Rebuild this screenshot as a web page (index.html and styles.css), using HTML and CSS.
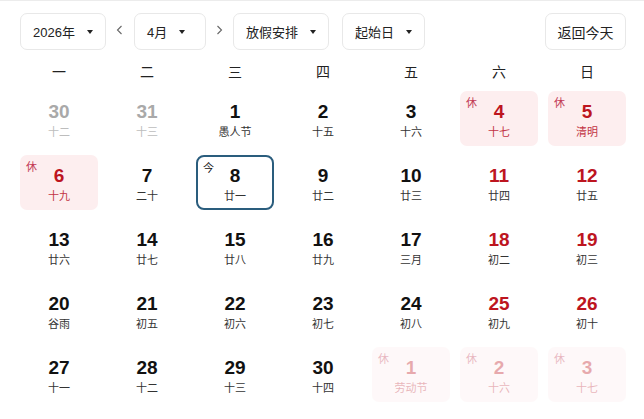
FILE: index.html
```html
<!DOCTYPE html>
<html lang="zh">
<head>
<meta charset="utf-8">
<link rel="stylesheet" href="styles.css">
</head>
<body>
<div class="page">
  <div class="toolbar">
    <div class="select select-year"><span>2026年</span><i class="caret"></i></div>
    <button class="arrow arrow-prev"><svg width="7" height="10" viewBox="0 0 7 10"><polyline points="5.5,1 1.5,5 5.5,9" fill="none" stroke="#666" stroke-width="1.1"/></svg></button>
    <div class="select select-month"><span>4月</span><i class="caret"></i></div>
    <button class="arrow arrow-next"><svg width="7" height="10" viewBox="0 0 7 10"><polyline points="1.5,1 5.5,5 1.5,9" fill="none" stroke="#666" stroke-width="1.1"/></svg></button>
    <div class="select"><span>放假安排</span><i class="caret"></i></div>
    <div class="select select-start"><span>起始日</span><i class="caret"></i></div>
    <button class="today-btn">返回今天</button>
  </div>
  <div class="weekdays">
    <div>一</div><div>二</div><div>三</div><div>四</div><div>五</div><div>六</div><div>日</div>
  </div>
  <div class="grid">
    <div class="cell other"><div class="num">30</div><div class="lunar">十二</div></div>
    <div class="cell other"><div class="num">31</div><div class="lunar">十三</div></div>
    <div class="cell"><div class="num">1</div><div class="lunar">愚人节</div></div>
    <div class="cell"><div class="num">2</div><div class="lunar">十五</div></div>
    <div class="cell"><div class="num">3</div><div class="lunar">十六</div></div>
    <div class="cell holiday"><span class="tag">休</span><div class="num">4</div><div class="lunar">十七</div></div>
    <div class="cell holiday"><span class="tag">休</span><div class="num">5</div><div class="lunar">清明</div></div>

    <div class="cell holiday"><span class="tag">休</span><div class="num">6</div><div class="lunar">十九</div></div>
    <div class="cell"><div class="num">7</div><div class="lunar">二十</div></div>
    <div class="cell today"><span class="tag">今</span><div class="num">8</div><div class="lunar">廿一</div></div>
    <div class="cell"><div class="num">9</div><div class="lunar">廿二</div></div>
    <div class="cell"><div class="num">10</div><div class="lunar">廿三</div></div>
    <div class="cell weekend"><div class="num">11</div><div class="lunar">廿四</div></div>
    <div class="cell weekend"><div class="num">12</div><div class="lunar">廿五</div></div>

    <div class="cell"><div class="num">13</div><div class="lunar">廿六</div></div>
    <div class="cell"><div class="num">14</div><div class="lunar">廿七</div></div>
    <div class="cell"><div class="num">15</div><div class="lunar">廿八</div></div>
    <div class="cell"><div class="num">16</div><div class="lunar">廿九</div></div>
    <div class="cell"><div class="num">17</div><div class="lunar">三月</div></div>
    <div class="cell weekend"><div class="num">18</div><div class="lunar">初二</div></div>
    <div class="cell weekend"><div class="num">19</div><div class="lunar">初三</div></div>

    <div class="cell"><div class="num">20</div><div class="lunar">谷雨</div></div>
    <div class="cell"><div class="num">21</div><div class="lunar">初五</div></div>
    <div class="cell"><div class="num">22</div><div class="lunar">初六</div></div>
    <div class="cell"><div class="num">23</div><div class="lunar">初七</div></div>
    <div class="cell"><div class="num">24</div><div class="lunar">初八</div></div>
    <div class="cell weekend"><div class="num">25</div><div class="lunar">初九</div></div>
    <div class="cell weekend"><div class="num">26</div><div class="lunar">初十</div></div>

    <div class="cell"><div class="num">27</div><div class="lunar">十一</div></div>
    <div class="cell"><div class="num">28</div><div class="lunar">十二</div></div>
    <div class="cell"><div class="num">29</div><div class="lunar">十三</div></div>
    <div class="cell"><div class="num">30</div><div class="lunar">十四</div></div>
    <div class="cell holiday faded"><span class="tag">休</span><div class="num">1</div><div class="lunar">劳动节</div></div>
    <div class="cell holiday faded"><span class="tag">休</span><div class="num">2</div><div class="lunar">十六</div></div>
    <div class="cell holiday faded"><span class="tag">休</span><div class="num">3</div><div class="lunar">十七</div></div>
  </div>
</div>
</body>
</html>
```
FILE: styles.css
```css
html, body {
  margin: 0;
  padding: 0;
  background: #fff;
}
body {
  font-family: "Liberation Sans", "Noto Sans CJK SC", sans-serif;
  color: #111;
  border-top: 1px solid #ececec;
  width: 644px;
  height: 418px;
  overflow: hidden;
}
.page {
  padding: 12px 18px 0 20px;
  width: 606px;
}
.toolbar {
  display: flex;
  align-items: center;
  height: 37px;
}
.select {
  box-sizing: border-box;
  height: 37px;
  display: flex;
  align-items: center;
  gap: 12px;
  padding: 0 12px 0 12px;
  border: 1px solid #e8e8e8;
  border-radius: 7px;
  font-size: 13px;
  color: #222;
  background: #fff;
}
.select-month {
  min-width: 72px;
  justify-content: flex-start;
}
.select-start {
  margin-left: 13px;
}
.caret {
  display: block;
  width: 0;
  height: 0;
  border-left: 3px solid transparent;
  border-right: 3px solid transparent;
  border-top: 4px solid #222;
}
.arrow {
  border: 0;
  background: none;
  padding: 0;
  height: 37px;
  display: flex;
  align-items: center;
  justify-content: center;
  width: 28px;
  margin-top: -4px;
}
.arrow-next {
  width: 27px;
}
.today-btn {
  margin-left: auto;
  box-sizing: border-box;
  height: 37px;
  width: 81px;
  border: 1px solid #e8e8e8;
  border-radius: 7px;
  background: #fff;
  font-family: inherit;
  font-size: 14px;
  color: #222;
  padding: 0;
}
.weekdays {
  display: grid;
  grid-template-columns: repeat(7, 78px);
  column-gap: 10px;
  margin-top: 12px;
  height: 20px;
  line-height: 20px;
  font-size: 14px;
  color: #222;
  text-align: center;
}
.grid {
  display: grid;
  grid-template-columns: repeat(7, 78px);
  grid-auto-rows: 55px;
  column-gap: 10px;
  row-gap: 9px;
  margin-top: 9px;
}
.cell {
  position: relative;
  box-sizing: border-box;
  border-radius: 7px;
  text-align: center;
  padding-top: 11px;
}
.num {
  font-size: 19px;
  font-weight: bold;
  line-height: 20px;
  color: #111;
}
.lunar {
  margin-top: 3px;
  font-size: 11px;
  line-height: 14px;
  color: #333;
}
.tag {
  position: absolute;
  top: 5px;
  left: 6px;
  font-size: 11px;
  line-height: 14px;
}
.other .num { color: #a9a9a9; }
.other .lunar { color: #bdbdbd; }
.weekend .num { color: #bd151f; }
.holiday { background: #fdeeef; }
.holiday .num { color: #bd151f; }
.holiday .lunar { color: #c23444; }
.holiday .tag { color: #c23a55; }
.faded { opacity: 0.36; }
.today {
  border: 2px solid #2a5d7d;
  border-radius: 8px;
  padding-top: 9px;
}
.today .tag {
  top: 4px;
  left: 5px;
  color: #111;
}
```
